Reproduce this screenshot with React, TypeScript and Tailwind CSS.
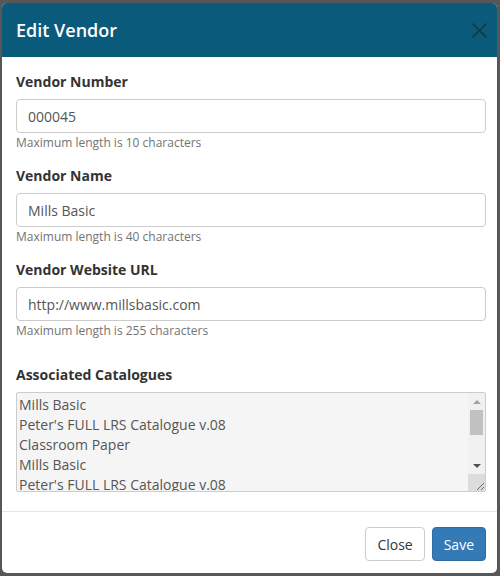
const fields = [
  { label: "Vendor Number", value: "000045", help: "Maximum length is 10 characters" },
  { label: "Vendor Name", value: "Mills Basic", help: "Maximum length is 40 characters" },
  { label: "Vendor Website URL", value: "http://www.millsbasic.com", help: "Maximum length is 255 characters" },
];

const catalogues = [
  "Mills Basic",
  "Peter's FULL LRS Catalogue v.08",
  "Classroom Paper",
  "Mills Basic",
  "Peter's FULL LRS Catalogue v.08",
];

export default function App() {
  return (
    <div
      className="h-[576px] w-[500px] overflow-hidden bg-[#575757] pl-[2px] pt-[3px]"
      style={{ fontFamily: '"Open Sans", "Liberation Sans", sans-serif' }}
    >
      <div className="flex h-[570px] w-[495px] flex-col overflow-hidden rounded-[5px] bg-white">
        {/* header */}
        <div className="flex h-[54px] items-center justify-between bg-[#0a5a7c] pl-[14px] pr-[10px]">
          <h4 className="text-[18px] font-semibold leading-[26px] text-white">Edit Vendor</h4>
          <button type="button" aria-label="Close" className="flex h-[15px] w-[15px] items-center justify-center">
            <svg width="15" height="15" viewBox="0 0 15 15">
              <path d="M0.5 0.5 L14.5 14.5 M14.5 0.5 L0.5 14.5" stroke="#14384a" strokeWidth="1.6" fill="none" />
            </svg>
          </button>
        </div>

        {/* body */}
        <div className="flex-1 pl-[14px] pr-[11px] pt-[15px]">
          {fields.map((f) => (
            <div key={f.label} className="mb-[15px]">
              <label className="mb-[7px] block text-[14px] font-bold leading-[20px] text-[#333]">{f.label}</label>
              <div className="flex h-[34px] items-center rounded-[4px] border border-[#ccc] px-[11px] text-[14px] text-[#555]">
                {f.value}
              </div>
              <p className="mt-[1px] text-[12px] leading-[17px] text-[#737373]">{f.help}</p>
            </div>
          ))}

          <div className="pt-[11px]">
            <label className="mb-[7px] block text-[14px] font-bold leading-[20px] text-[#333]">
              Associated Catalogues
            </label>
            <div className="flex h-[100px] overflow-hidden rounded-[2px] border border-[#ccc] bg-[#f5f5f5]">
              <div className="flex-1 overflow-hidden pl-[2px] pt-[2px] text-[14px] leading-[20px] text-[#555]">
                {catalogues.map((c, i) => (
                  <div key={i} className="whitespace-nowrap">
                    {c}
                  </div>
                ))}
              </div>
              {/* scrollbar */}
              <div className="flex w-[17px] flex-col bg-[#f1f1f1]">
                <div className="flex h-[17px] items-center justify-center">
                  <div className="h-0 w-0 border-x-[4px] border-b-[4px] border-x-transparent border-b-[#a3a3a3]" />
                </div>
                <div className="mx-[2px] h-[25px] bg-[#c1c1c1]" />
                <div className="flex-1" />
                <div className="flex h-[17px] items-center justify-center">
                  <div className="h-0 w-0 border-x-[4px] border-t-[4px] border-x-transparent border-t-[#505050]" />
                </div>
                <div className="relative h-[17px] bg-[#dcdcdc]">
                  <svg className="absolute bottom-0 right-0" width="10" height="10" viewBox="0 0 10 10">
                    <path d="M9 2 L2 9 M9 6 L6 9" stroke="#6b6b6b" strokeWidth="1" fill="none" />
                  </svg>
                </div>
              </div>
            </div>
          </div>
        </div>

        {/* footer */}
        <div className="flex h-[62px] items-start justify-end gap-[7px] border-t border-[#e5e5e5] pr-[11px] pt-[15px]">
          <button
            type="button"
            className="h-[34px] rounded-[4px] border border-[#ccc] bg-white px-[11px] text-[14px] text-[#333]"
          >
            Close
          </button>
          <button
            type="button"
            className="h-[34px] rounded-[4px] border border-[#2e6da4] bg-[#337ab7] px-[11px] text-[14px] text-white"
          >
            Save
          </button>
        </div>
      </div>
    </div>
  );
}
